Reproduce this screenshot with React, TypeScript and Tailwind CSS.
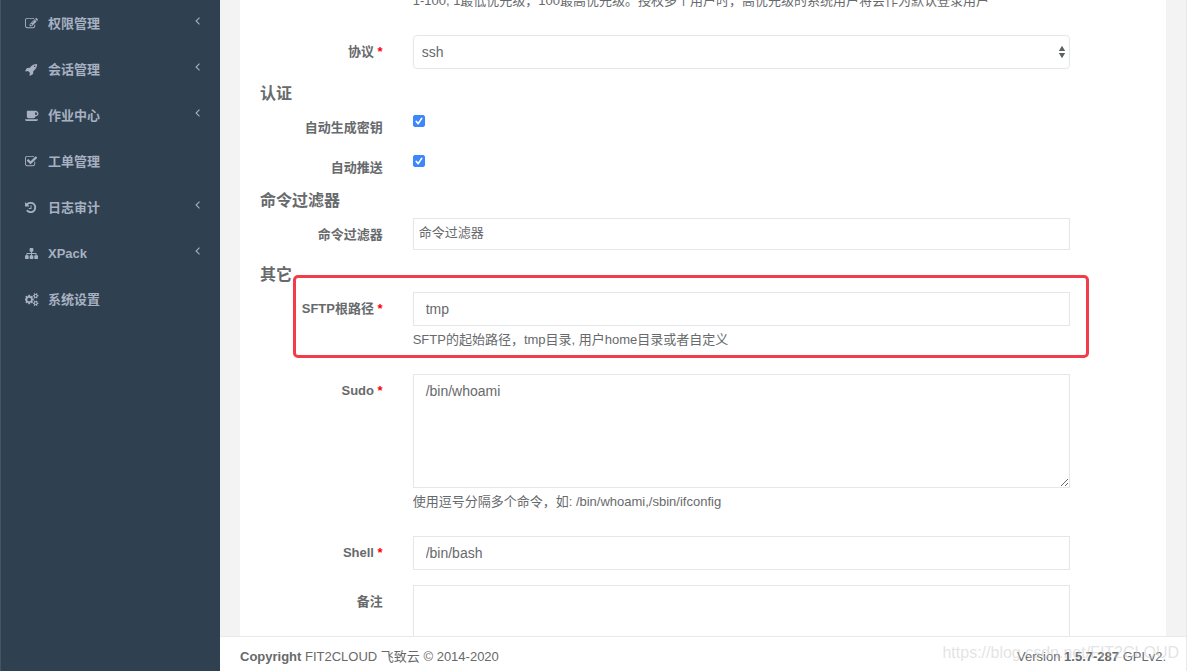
import React from "react";

const iconPaths = {
	edit: "M888 1184l116-116-152-152-116 116v56h96v96h56zm440-720q-16-16-33 1l-350 350q-17 17-1 33t33-1l350-350q17-17 1-33zm80 594v190q0 119-84.5 203.5t-203.5 84.5h-832q-119 0-203.5-84.5t-84.5-203.5v-832q0-119 84.5-203.5t203.5-84.5h832q63 0 117 25 15 7 18 23 3 17-9 29l-49 49q-14 14-32 8-23-6-45-6h-832q-66 0-113 47t-47 113v832q0 66 47 113t113 47h832q66 0 113-47t47-113v-126q0-13 9-22l64-64q15-15 35-7t20 29zm-96-738l288 288-672 672h-288v-288zm444 132l-92 92-288-288 92-92q28-28 68-28t68 28l152 152q28 28 28 68t-28 68z",
	rocket: "M1440 448q0-40-28-68t-68-28-68 28-28 68 28 68 68 28 68-28 28-68zm224-288q0 249-75.5 430.5t-253.5 360.5q-81 80-195 176l-20 379q-2 16-16 26l-384 224q-7 4-16 4-12 0-23-9l-64-64q-13-14-8-32l85-276-281-281-276 85q-3 1-9 1-14 0-23-9l-64-64q-17-19-5-39l224-384q10-14 26-16l379-20q96-114 176-195 188-187 358-258t431-71q14 0 24 9.5t10 22.5z",
	coffee: "M1664 640q0-80-56-136t-136-56h-64v384h64q80 0 136-56t56-136zM0 1408h1792q0 106-75 181t-181 75h-1280q-106 0-181-75t-75-181zM1856 640q0 159-112.5 271.5t-271.5 112.5h-64v32q0 92-66 158t-158 66h-704q-92 0-158-66t-66-158v-736q0-26 19-45t45-19h1152q159 0 271.5 112.5t112.5 271.5z",
	check: "M1472 930v318q0 119-84.5 203.5t-203.5 84.5h-832q-119 0-203.5-84.5t-84.5-203.5v-832q0-119 84.5-203.5t203.5-84.5h832q63 0 117 25 15 7 18 23 3 17-9 29l-49 49q-10 10-23 10-3 0-9-2-23-6-45-6h-832q-66 0-113 47t-47 113v832q0 66 47 113t113 47h832q66 0 113-47t47-113v-254q0-13 9-22l64-64q10-10 23-10 6 0 12 3 20 8 20 29zm231-489l-814 814q-24 24-57 24t-57-24l-430-430q-24-24-24-57t24-57l110-110q24-24 57-24t57 24l263 263 647-647q24-24 57-24t57 24l110 110q24 24 24 57t-24 57z",
	history: "M1664 896q0 156-61 298t-164 245-245 164-298 61q-172 0-327-72.5t-264-204.5q-7-10-6.5-22.5t8.5-20.5l137-138q10-9 25-9 16 2 23 12 73 95 179 147t225 52q104 0 198.5-40.5t163.5-109.5 109.5-163.5 40.5-198.5-40.5-198.5-109.5-163.5-163.5-109.5-198.5-40.5q-98 0-188 35.5t-160 101.5l137 138q31 30 14 69-17 40-59 40h-448q-26 0-45-19t-19-45v-448q0-42 40-59 39-17 69 14l130 129q107-101 244.5-156.5t284.5-55.5q156 0 298 61t245 164 164 245 61 298zm-640-288v448q0 14-9 23t-23 9h-320q-14 0-23-9t-9-23v-64q0-14 9-23t23-9h224v-352q0-14 9-23t23-9h64q14 0 23 9t9 23z",
	sitemap: "M1792 1248v320q0 40-28 68t-68 28h-320q-40 0-68-28t-28-68v-320q0-40 28-68t68-28h96v-192h-512v192h96q40 0 68 28t28 68v320q0 40-28 68t-68 28h-320q-40 0-68-28t-28-68v-320q0-40 28-68t68-28h96v-192h-512v192h96q40 0 68 28t28 68v320q0 40-28 68t-68 28h-320q-40 0-68-28t-28-68v-320q0-40 28-68t68-28h96v-192q0-52 38-90t90-38h512v-192h-96q-40 0-68-28t-28-68v-320q0-40 28-68t68-28h320q40 0 68 28t28 68v320q0 40-28 68t-68 28h-96v192h512q52 0 90 38t38 90v192h96q40 0 68 28t28 68z",
	cogs: "M832 896q0-106-75-181t-181-75-181 75-75 181 75 181 181 75 181-75 75-181zm768 512q0-52-38-90t-90-38-90 38-38 90q0 53 37.5 90.5t90.5 37.5 90.5-37.5 37.5-90.5zm0-1024q0-52-38-90t-90-38-90 38-38 90q0 53 37.5 90.5t90.5 37.5 90.5-37.5 37.5-90.5zm-384 421v185q0 10-7 19.5t-16 10.5l-155 24q-11 35-32 76 34 48 90 115 7 10 7 20 0 12-7 19-23 30-82.5 89.5t-78.5 59.5q-11 0-21-7l-115-90q-37 19-77 31-11 108-23 155-7 24-30 24h-186q-11 0-20-7.5t-10-17.5l-23-153q-34-10-75-31l-118 89q-7 7-20 7-11 0-21-8-144-133-144-160 0-9 7-19 10-14 41-53t47-61q-23-44-35-82l-152-24q-10-1-17-9.5t-7-19.5v-185q0-10 7-19.5t16-10.5l155-24q11-35 32-76-34-48-90-115-7-11-7-20 0-12 7-20 22-30 82-89t79-59q11 0 21 7l115 90q34-18 77-32 11-108 23-154 7-24 30-24h186q11 0 20 7.5t10 17.5l23 153q34 10 75 31l118-89q8-7 20-7 11 0 21 8 144 133 144 160 0 9-7 19-12 16-42 54t-45 60q23 48 34 82l152 23q10 2 17 10.5t7 19.5zm640 533v140q0 16-149 31-12 27-30 52 51 113 51 138 0 4-4 7-122 71-124 71-8 0-46-47t-52-68q-20 2-30 2t-30-2q-14 21-52 68t-46 47q-2 0-124-71-4-3-4-7 0-25 51-138-18-25-30-52-149-15-149-31v-140q0-16 149-31 13-29 30-52-51-113-51-138 0-4 4-7 4-2 35-20t59-34 30-16q8 0 46 46.5t52 67.5q20-2 30-2t30 2q51-71 92-112l6-2q4 0 124 70 4 3 4 7 0 25-51 138 17 23 30 52 149 15 149 31zm0-1024v140q0 16-149 31-12 27-30 52 51 113 51 138 0 4-4 7-122 71-124 71-8 0-46-47t-52-68q-20 2-30 2t-30-2q-14 21-52 68t-46 47q-2 0-124-71-4-3-4-7 0-25 51-138-18-25-30-52-149-15-149-31v-140q0-16 149-31 13-29 30-52-51-113-51-138 0-4 4-7 4-2 35-20t59-34 30-16q8 0 46 46.5t52 67.5q20-2 30-2t30 2q51-71 92-112l6-2q4 0 124 70 4 3 4 7 0 25-51 138 17 23 30 52 149 15 149 31z",
};

type IconName = keyof typeof iconPaths;

// left is the blank part of the glyph before its first stroke
const navItems: { label: string; icon: IconName; left: number; open: boolean }[] = [
	{ label: "权限管理", icon: "edit", left: 0, open: true },
	{ label: "会话管理", icon: "rocket", left: 0, open: true },
	{ label: "作业中心", icon: "coffee", left: 0, open: true },
	{ label: "工单管理", icon: "check", left: 64, open: false },
	{ label: "日志审计", icon: "history", left: 128, open: true },
	{ label: "XPack", icon: "sitemap", left: 0, open: true },
	{ label: "系统设置", icon: "cogs", left: 0, open: false },
];

const inputClass =
	"block w-full h-[34px] px-3 border border-[#e5e6e7] bg-white text-[14px] leading-5 outline-none focus:border-[#1ab394]";
const areaClass =
	"block w-full h-[114px] px-3 py-1.5 border border-[#e5e6e7] bg-white text-[14px] leading-5 outline-none resize focus:border-[#1ab394]";

function Sidebar() {
	return (
		<nav className="w-[220px] shrink-0 bg-[#2f4050] border-l border-[#435463] text-[#a7b1c2]">
			<ul>
				{navItems.map((item) => (
					<li key={item.label}>
						<a href="#" className="flex items-center gap-[9px] pl-6 pr-5 py-[13px] text-[13px] leading-[18px] font-semibold hover:text-white">
							<svg className="w-[14px] h-[13px] shrink-0" viewBox={`${item.left} 0 1930 1792`} fill="currentColor" fillRule="evenodd" aria-hidden="true">
								<path d={iconPaths[item.icon]} />
							</svg>
							<span className="flex-1 pt-0.5">{item.label}</span>
							{item.open && (
								<svg className="w-[5px] h-2 mb-1" viewBox="0 0 5 8" fill="none" stroke="currentColor" strokeWidth="1.1" aria-hidden="true">
									<path d="M4.5 0.7L1.1 4l3.4 3.3" />
								</svg>
							)}
						</a>
					</li>
				))}
			</ul>
		</nav>
	);
}

interface FieldProps {
	id: string;
	label: string;
	required?: boolean;
	help?: string;
	highlight?: boolean;
	children: React.ReactNode;
}

function Field({ id, label, required, help, highlight, children }: FieldProps) {
	return (
		<div className="relative grid grid-cols-12 mb-[14px]">
			<label htmlFor={id} className="col-span-2 px-[15px] pt-2 text-right font-semibold whitespace-nowrap">
				{label}
				{required && <span className="text-[#f00]"> *</span>}
			</label>
			<div className="col-span-9 px-[15px] pb-px">
				{children}
				{help && <p className="mt-[5px] mb-[10px]">{help}</p>}
			</div>
			{highlight && (
				<div className="absolute left-12 right-[72px] -top-[17px] bottom-0.5 border-3 border-[#f23c49] rounded-[5px] pointer-events-none" />
			)}
		</div>
	);
}

function Tick({ id }: { id: string }) {
	return (
		<span className="relative block w-3 mt-1">
			<input id={id} type="checkbox" defaultChecked className="peer block size-3 appearance-none rounded-[2px] border border-gray-400 checked:border-[#3b87fb] checked:bg-[#3b87fb]" />
			<svg className="absolute inset-0 size-3 hidden peer-checked:block pointer-events-none" viewBox="0 0 12 12" fill="none" stroke="white" strokeWidth="1.7" strokeLinecap="round" strokeLinejoin="round" aria-hidden="true">
				<path d="M3.3 6.5L5.2 8.6 8.7 3.4" />
			</svg>
		</span>
	);
}

function Heading({ children }: { children: React.ReactNode }) {
	return <h3 className="px-[15px] mb-2 text-[16px] leading-[19px] font-semibold">{children}</h3>;
}

export default function App() {
	return (
		<div className="flex h-screen overflow-hidden bg-[#f3f3f4] text-[13px] leading-[18px] text-[#676a6c] font-['Liberation_Sans','Noto_Sans_CJK_SC',sans-serif]">
			<Sidebar />
			<div className="flex-1 min-w-0 flex flex-col border-r border-[#e7eaec]">
				<main className="flex-1 min-h-0 overflow-hidden px-5">
					<form className="-mt-2 px-[5px] bg-white">
						<div className="grid grid-cols-12 mb-[15px]">
							<p className="col-span-9 col-start-3 px-[15px] mb-[10px]">
								1-100, 1最低优先级，100最高优先级。授权多个用户时，高优先级的系统用户将会作为默认登录用户
							</p>
						</div>
						<Field id="protocol" label="协议" required>
							<div className="relative">
								<select id="protocol" defaultValue="ssh" className="block w-full h-[34px] px-2 appearance-none rounded border border-[#e5e6e7] bg-white text-[14px] outline-none">
									<option>ssh</option>
									<option>rdp</option>
									<option>telnet</option>
									<option>vnc</option>
								</select>
								<svg className="absolute right-1 top-[10px] w-2 h-[14px] pointer-events-none" viewBox="0 0 8 14" fill="#5f6264" aria-hidden="true">
									<path d="M0.8 6L4 0.8 7.2 6zM0.8 8h6.4L4 13.2z" />
								</svg>
							</div>
						</Field>
						<Heading>认证</Heading>
						<Field id="auto-key" label="自动生成密钥">
							<Tick id="auto-key" />
						</Field>
						<Field id="auto-push" label="自动推送">
							<Tick id="auto-push" />
						</Field>
						<Heading>命令过滤器</Heading>
						<Field id="filters" label="命令过滤器">
							<input id="filters" type="text" placeholder="命令过滤器" className="block w-full h-8 px-[5px] pb-1 border border-[#e5e6e7] bg-white outline-none placeholder:text-[#676a6c]" />
						</Field>
						<Heading>其它</Heading>
						<Field id="sftp-root" label="SFTP根路径" required highlight help="SFTP的起始路径，tmp目录, 用户home目录或者自定义">
							<input id="sftp-root" type="text" defaultValue="tmp" className={inputClass} />
						</Field>
						<Field id="sudo" label="Sudo" required help="使用逗号分隔多个命令，如: /bin/whoami,/sbin/ifconfig">
							<textarea id="sudo" defaultValue="/bin/whoami" className={areaClass} />
						</Field>
						<Field id="shell" label="Shell" required>
							<input id="shell" type="text" defaultValue="/bin/bash" className={inputClass} />
						</Field>
						<Field id="comment" label="备注">
							<textarea id="comment" className={areaClass} />
						</Field>
					</form>
				</main>
				<footer className="relative flex justify-between px-5 pt-[11px] pb-[5px] border-t border-[#e7eaec] bg-white">
					<div>
						<strong>Copyright</strong> FIT2CLOUD 飞致云 © 2014-2020
					</div>
					<div>
						Version <strong>1.5.7-287</strong> GPLv2.
					</div>
					<span className="absolute right-[7px] top-[7px] text-[16px] text-[#c8c8c8]/50 pointer-events-none">
						https://blog.csdn.net/FIT2CLOUD
					</span>
				</footer>
			</div>
		</div>
	);
}
